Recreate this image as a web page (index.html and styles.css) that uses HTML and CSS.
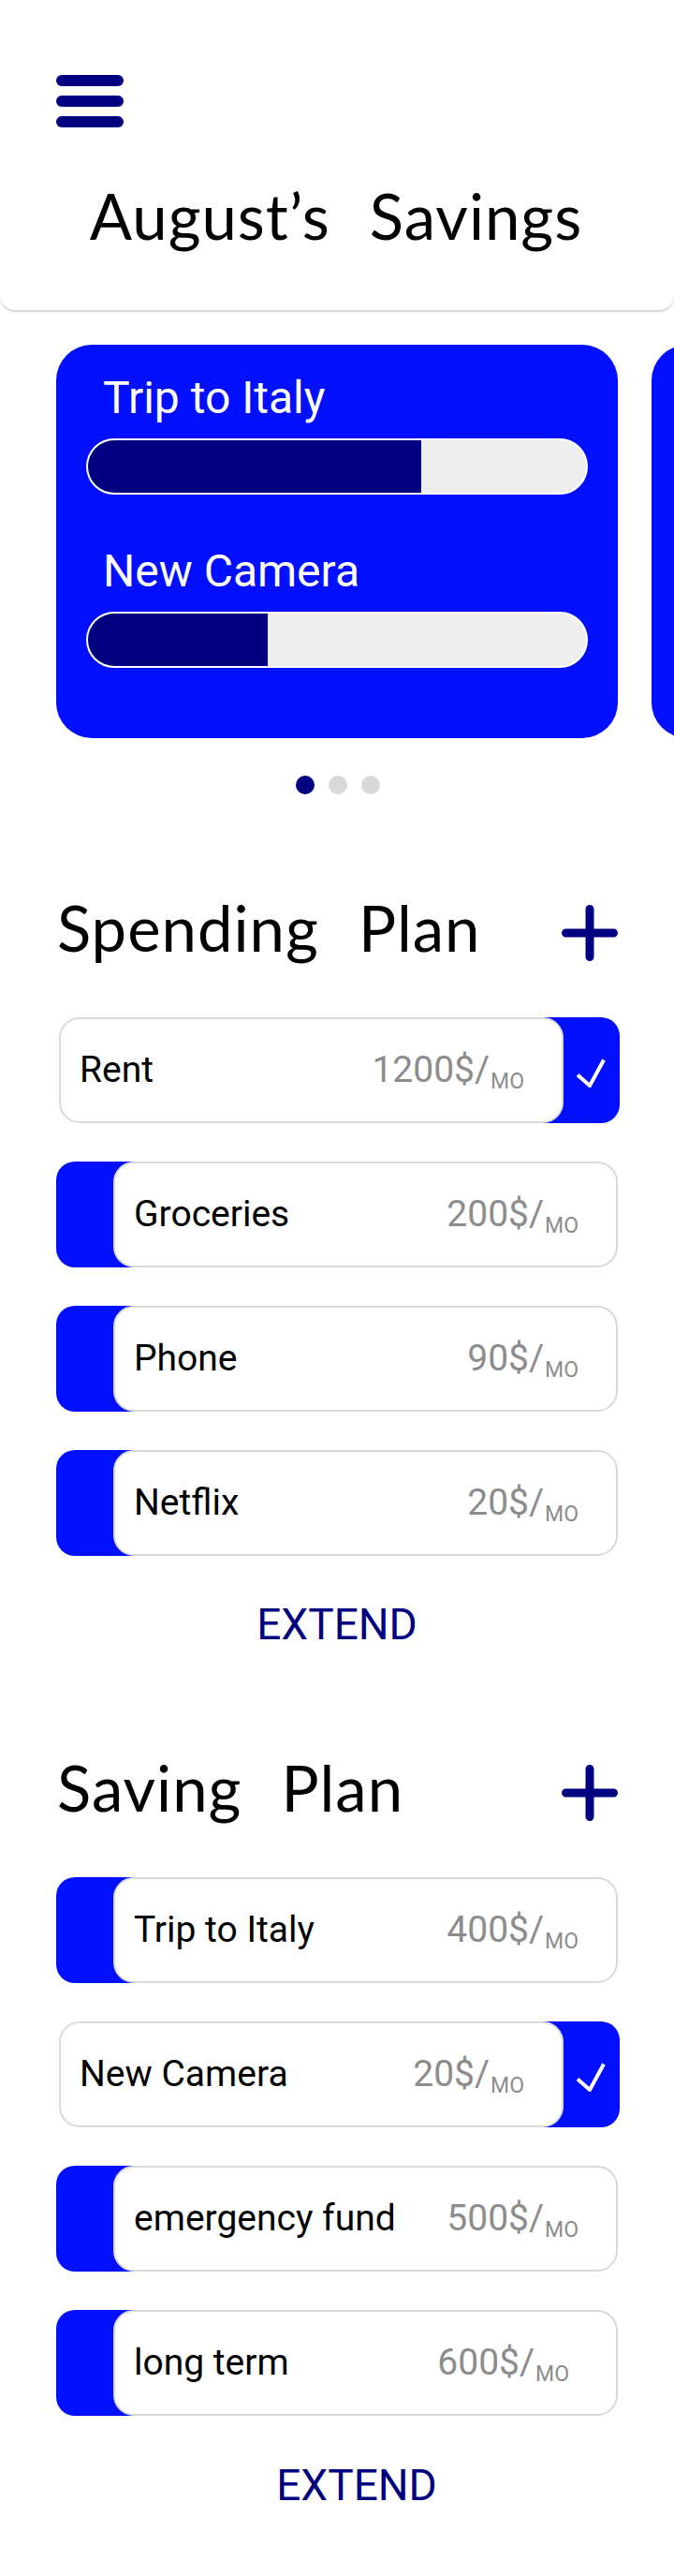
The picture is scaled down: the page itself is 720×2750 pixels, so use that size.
FILE: index.html
```html
<!DOCTYPE html>
<html lang="en">
<head>
<meta charset="utf-8">
<title>August’s Savings</title>
<link rel="stylesheet" href="styles.css">
</head>
<body>
<header class="topbar">
  <button class="menu" aria-label="Menu"><span></span><span></span><span></span></button>
  <h1 class="page-title">August’s Savings</h1>
</header>

<section class="carousel">
  <div class="track">
    <div class="goal-card">
      <div class="goal">
        <div class="goal-name">Trip to Italy</div>
        <div class="bar"><div class="fill" style="width:67%"></div></div>
      </div>
      <div class="goal">
        <div class="goal-name">New Camera</div>
        <div class="bar"><div class="fill" style="width:36%"></div></div>
      </div>
    </div>
    <div class="goal-card"></div>
  </div>
  <div class="dots"><span class="dot active"></span><span class="dot"></span><span class="dot"></span></div>
</section>

<section class="plan plan-spending">
  <div class="plan-head">
    <h2 class="plan-title">Spending Plan</h2>
    <button class="add" aria-label="Add">
      <svg width="60" height="60" viewBox="0 0 60 60"><path d="M30 4.5V55.5M4.5 30H55.5" stroke="#000080" stroke-width="9" stroke-linecap="round" fill="none"/></svg>
    </button>
  </div>
  <ul class="plan-list">
    <li class="item done">
      <div class="item-body"><span class="name">Rent</span><span class="amount">1200$/<sub>MO</sub></span></div>
      <span class="tab"><svg width="36" height="36" viewBox="0 0 36 36"><polyline points="2,22.5 15,34 30,6.5" fill="none" stroke="#fff" stroke-width="4"/></svg></span>
    </li>
    <li class="item open">
      <span class="tab"></span>
      <div class="item-body"><span class="name">Groceries</span><span class="amount">200$/<sub>MO</sub></span></div>
    </li>
    <li class="item open">
      <span class="tab"></span>
      <div class="item-body"><span class="name">Phone</span><span class="amount">90$/<sub>MO</sub></span></div>
    </li>
    <li class="item open">
      <span class="tab"></span>
      <div class="item-body"><span class="name">Netflix</span><span class="amount">20$/<sub>MO</sub></span></div>
    </li>
  </ul>
  <div class="extend-row"><button class="extend">EXTEND</button></div>
</section>

<section class="plan plan-saving">
  <div class="plan-head">
    <h2 class="plan-title">Saving Plan</h2>
    <button class="add" aria-label="Add">
      <svg width="60" height="60" viewBox="0 0 60 60"><path d="M30 4.5V55.5M4.5 30H55.5" stroke="#000080" stroke-width="9" stroke-linecap="round" fill="none"/></svg>
    </button>
  </div>
  <ul class="plan-list">
    <li class="item open">
      <span class="tab"></span>
      <div class="item-body"><span class="name">Trip to Italy</span><span class="amount">400$/<sub>MO</sub></span></div>
    </li>
    <li class="item done">
      <div class="item-body"><span class="name">New Camera</span><span class="amount">20$/<sub>MO</sub></span></div>
      <span class="tab"><svg width="36" height="36" viewBox="0 0 36 36"><polyline points="2,22.5 15,34 30,6.5" fill="none" stroke="#fff" stroke-width="4"/></svg></span>
    </li>
    <li class="item open">
      <span class="tab"></span>
      <div class="item-body"><span class="name">emergency fund</span><span class="amount">500$/<sub>MO</sub></span></div>
    </li>
    <li class="item open">
      <span class="tab"></span>
      <div class="item-body item-body-wide"><span class="name">long term</span><span class="amount">600$/<sub>MO</sub></span></div>
    </li>
  </ul>
  <div class="extend-row extend-row-shift"><button class="extend">EXTEND</button></div>
</section>
</body>
</html>
```

FILE: styles.css
```css
* { box-sizing: border-box; }

html, body {
  margin: 0;
  padding: 0;
  background: #ffffff;
}

body {
  width: 720px;
  overflow-x: hidden;
  font-family: Roboto, "Liberation Sans", sans-serif;
  color: #000;
}

button {
  font: inherit;
  background: none;
  border: 0;
  padding: 0;
  margin: 0;
  cursor: pointer;
}

/* ---------- header ---------- */
.topbar {
  height: 331px;
  padding-top: 80px;
  background: #fff;
  border-radius: 0 0 16px 16px;
  box-shadow: 0 2px 2px rgba(0, 0, 0, 0.18);
  position: relative;
  z-index: 1;
}

.menu {
  display: flex;
  flex-direction: column;
  gap: 10px;
  margin-left: 60px;
  width: 72px;
}

.menu span {
  display: block;
  width: 72px;
  height: 12px;
  border-radius: 6px;
  background: #000080;
}

.page-title {
  margin: 61px 0 0;
  text-align: center;
  font-family: Lato, "Open Sans", sans-serif;
  font-weight: 400;
  font-size: 67px;
  line-height: 67px;
  letter-spacing: 1px;
  word-spacing: 24px;
  padding-right: 2px;
}

/* ---------- carousel ---------- */
.carousel {
  padding-top: 37px;
  overflow: hidden;
}

.track {
  display: flex;
  gap: 36px;
  padding-left: 60px;
}

.goal-card {
  flex: none;
  width: 600px;
  height: 420px;
  border-radius: 38px;
  background: #0010ff;
  padding: 33px 32px 0;
}

.goal + .goal {
  margin-top: 58px;
}

.goal-name {
  padding-left: 18px;
  color: #fff;
  font-size: 48px;
  line-height: 48px;
}

.bar {
  margin-top: 19px;
  height: 60px;
  border: 2px solid #fff;
  border-radius: 30px;
  background: #eeeeee;
  overflow: hidden;
}

.fill {
  height: 100%;
  background: #000080;
}

.dots {
  display: flex;
  justify-content: center;
  gap: 15px;
  margin-top: 40px;
  padding-left: 2px;
}

.dot {
  width: 20px;
  height: 20px;
  border-radius: 50%;
  background: #d9d9d9;
}

.dot.active {
  background: #000080;
}

/* ---------- plans ---------- */
.plan-spending {
  margin-top: 118px;
}

.plan-saving {
  margin-top: 127px;
}

.plan-head {
  display: flex;
  align-items: center;
  justify-content: space-between;
  padding: 0 60px 0 61px;
  height: 60px;
}

.plan-title {
  margin: 0;
  padding-bottom: 12px;
  font-family: Lato, "Open Sans", sans-serif;
  font-weight: 400;
  font-size: 67px;
  line-height: 60px;
  letter-spacing: 1px;
  word-spacing: 24px;
}

.add {
  width: 60px;
  height: 60px;
  display: block;
}

.add svg {
  display: block;
}

.plan-list {
  list-style: none;
  margin: 60px 0 0;
  padding: 0 60px;
  display: flex;
  flex-direction: column;
  gap: 41px;
}

.item {
  display: flex;
  height: 113px;
  border-radius: 20px;
}

.item.done {
  margin-left: 3px;
  margin-right: -2px;
  background: linear-gradient(to left, #0010ff 95px, transparent 95px);
}

.item.open {
  background: linear-gradient(to right, #0010ff 95px, transparent 95px);
}

.tab {
  flex: none;
  width: 61px;
  display: flex;
  align-items: center;
  justify-content: center;
}

.item.done .tab {
  width: 60px;
  padding-left: 2px;
}

.item-body {
  flex: 1;
  display: flex;
  align-items: center;
  justify-content: space-between;
  background: #fff;
  border: 2px solid #d9d9d9;
  border-radius: 22px;
  padding: 0 40px 0 20px;
}

.item-body-wide {
  padding-right: 50px;
}

.name {
  font-size: 39px;
  line-height: 39px;
  color: #000;
}

.amount {
  font-size: 39px;
  line-height: 39px;
  color: #8c8c8c;
  white-space: nowrap;
}

.amount sub {
  font-size: 23px;
  line-height: 0;
  vertical-align: -7px;
  margin-left: 1px;
}

.extend-row {
  display: flex;
  justify-content: center;
  margin-top: 50px;
}

.extend-row-shift {
  margin-top: 51px;
  padding-left: 42px;
  padding-bottom: 74px;
}

.extend {
  color: #000080;
  font-size: 46px;
  line-height: 46px;
  font-family: Roboto, "Liberation Sans", sans-serif;
}
```
